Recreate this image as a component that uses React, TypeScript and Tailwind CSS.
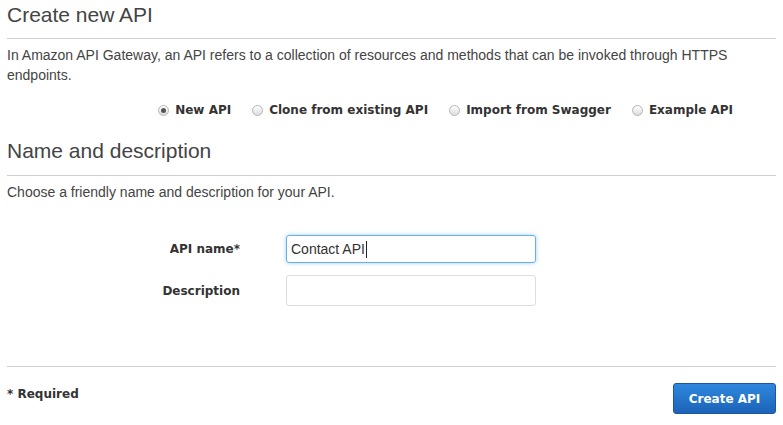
import React from "react";

function Radio({ label, checked }: { label: string; checked?: boolean }) {
  return (
    <div className="flex items-center gap-[6px]">
      <span className="flex h-[11px] w-[11px] items-center justify-center rounded-full border border-[#b5b5b5] bg-gradient-to-b from-[#ffffff] to-[#dcdcdc]">
        {checked && <span className="h-[5px] w-[5px] rounded-full bg-[#555]" />}
      </span>
      <span className="font-['DejaVu_Sans',sans-serif] text-[12px] font-bold leading-[20px] text-[#333]">
        {label}
      </span>
    </div>
  );
}

export default function App() {
  return (
    <div className="h-[425px] w-[783px] overflow-hidden bg-white px-[7px] font-['Liberation_Sans',Arial,sans-serif] text-[#444]">
      <h1 className="pt-[3px] text-[21px] font-normal leading-[24px] text-[#444]">Create new API</h1>
      <div className="mt-[11px] h-px bg-[#cfcfcf]" />
      <p className="mt-[6px] text-[14px] leading-[20px] text-[#444]">
        In Amazon API Gateway, an API refers to a collection of resources and methods that can be invoked through HTTPS
        endpoints.
      </p>
      <div className="mt-[15px] flex h-[20px] items-center justify-end gap-[21px] pr-[43px]">
        <Radio label="New API" checked />
        <Radio label="Clone from existing API" />
        <Radio label="Import from Swagger" />
        <Radio label="Example API" />
      </div>
      <h2 className="mt-[19px] text-[21px] font-normal leading-[24px] text-[#444]">Name and description</h2>
      <div className="mt-[12px] h-px bg-[#cfcfcf]" />
      <p className="mt-[6px] text-[14px] leading-[20px] text-[#444]">
        Choose a friendly name and description for your API.
      </p>
      <div className="mt-[33px]">
        <div className="flex items-center">
          <div className="w-[233px] text-right font-['DejaVu_Sans',sans-serif] text-[12px] font-bold leading-[20px] text-[#333]">
            API name*
          </div>
          <div className="ml-[46px] flex h-[28px] w-[250px] items-center rounded-[3px] border border-[#66afe9] px-[4px] text-[14px] text-[#333] shadow-[0_0_4px_rgba(102,175,233,0.6)]">
            <span>Contact API</span>
            <span className="ml-[1px] h-[17px] w-px bg-[#222]" />
          </div>
        </div>
        <div className="mt-[12px] flex items-center">
          <div className="w-[233px] text-right font-['DejaVu_Sans',sans-serif] text-[12px] font-bold leading-[20px] text-[#333]">
            Description
          </div>
          <div className="ml-[46px] h-[31px] w-[250px] rounded-[3px] border border-[#dddddd] bg-white" />
        </div>
      </div>
      <div className="mt-[60px] h-px bg-[#cfcfcf]" />
      <div className="mt-[16px] flex justify-between">
        <div className="mt-[1px] font-['DejaVu_Sans',sans-serif] text-[12px] font-bold leading-[20px] text-[#333]">
          * Required
        </div>
        <button className="flex h-[31px] w-[103px] items-center justify-center rounded-[3px] border border-[#1a57a0] bg-gradient-to-b from-[#2f88de] to-[#1b63b8] font-['DejaVu_Sans',sans-serif] text-[12px] font-bold text-white">
          Create API
        </button>
      </div>
    </div>
  );
}
